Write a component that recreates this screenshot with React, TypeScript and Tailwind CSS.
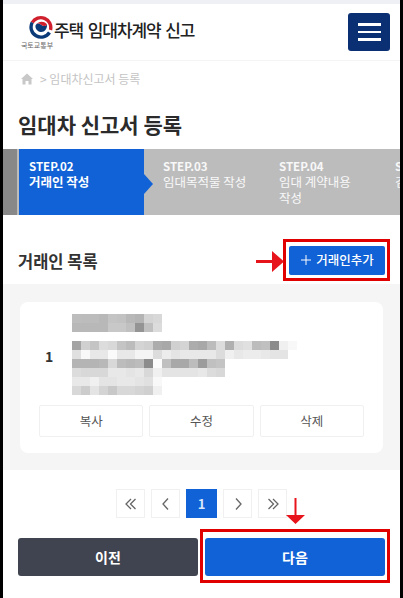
import React from "react";

const font = "font-['Noto_Sans_CJK_KR','Noto_Sans',sans-serif]";

// blurred-out personal info, one row of grey cells per line
const mosaicRows: string[][] = [
  ["#bdbdbd", "#bcbcbc", "#bcbcbc", "#b8b8b8", "#c4c4c4", "#c2c2c2", "#b8b8b8", "#b4b4b4", "#d4d4d4", "#d8d8d8"],
  ["#b8b8b8", "#b8b8b8", "#b8b8b8", "#b8b8b8", "#c8c8c8", "#c8c8c8", "#c0c0c0", "#949494", "#c0c0c0", "#dcdcdc"],
  [],
  ["#a4a4a4", "#d0d0d0", "#c4c4c4", "#dcdcdc", "#d8d8d8", "#c4c4c4", "#bcbcbc", "#d4d4d4", "#d0d0d0", "#acacac", "#a8a8a8", "#d0d0d0", "#d4d4d4", "#acacac", "#a8a8a8", "#bcbcbc", "#dcdcdc", "#b0b0b0", "#dcdcdc", "#e0e0e0", "#bcbcbc", "#c0c0c0", "#8c8c8c", "#f0f0f0", "#f8f8f8"],
  ["#e0e0e0", "#f8f8f8", "#e8e8e8", "#e8e8e8", "#fafafa", "#e8e8e8", "#e8e8e8", "#f4f4f4", "#f4f4f4", "#dcdcdc", "#ececec", "#e4e4e4", "#e8e8e8", "#e8e8e8", "#e8e8e8", "#e8e8e8", "#dcdcdc", "#f0f0f0", "#e8e8e8", "#ececec", "#ececec", "#e8e8e8", "#e4e4e4", "#e4e4e4"],
  ["#b4b4b4", "#b4b4b4", "#b4b4b4", "#b8b8b8", "#d8d8d8", "#bcbcbc", "#b8b8b8", "#bcbcbc", "#8c8c8c", "#fcfcfc", "#c0c0c0", "#a8a8a8", "#a8a8a8", "#bcbcbc", "#9c9c9c", "#c0c0c0", "#c4c4c4"],
  ["#dcdcdc", "#d8d8d8", "#d8d8d8", "#d8d8d8", "#e8e8e8", "#e8e8e8", "#e4e4e4", "#e8e8e8", "#d8d8d8", "#f0f0f0", "#e4e4e4", "#e4e4e4", "#e4e4e4", "#e4e4e4", "#e8e8e8", "#dcdcdc", "#d8d8d8"],
  ["#e8e8e8", "#e8e8e8", "#f0f0f0", "#e4e4e4", "#e4e4e4", "#e8e8e8", "#e8e8e8", "#e4e4e4", "#e0e0e0", "#f8f8f8"],
  ["#d8d8d8", "#cccccc", "#e4e4e4", "#d4d4d4", "#c8c8c8", "#d8d8d8", "#d8d8d8", "#d4d4d4", "#d0d0d0", "#f0f0f0"],
];

const Mosaic = () => (
  <div className="flex flex-col">
    {mosaicRows.map((row, i) => (
      <div key={i} className="flex h-[9px]">
        {row.map((c, j) => (
          <div key={j} className="w-[9px] h-[9px] shrink-0" style={{ backgroundColor: c }} />
        ))}
      </div>
    ))}
  </div>
);

const Logo = () => (
  <div className="flex flex-col items-center w-[34px]">
    <svg width="24" height="24" viewBox="0 0 24 24" fill="none" className="ml-[5px]">
      <path d="M3.200 7.500A10 10 0 0 1 21.500 15" stroke="#d0202e" strokeWidth="3.400" />
      <path d="M3.200 7.500A10 10 0 0 0 20.500 17.500" stroke="#0b3a78" strokeWidth="3.400" />
      <path d="M6.500 10.500C8 7.500 11 8.500 12.500 10c1.500 1.500 4 1.500 5.500-.5.500 4-2.500 8-6.500 7.500-3-.3-5.500-3.500-5-6.500Z" fill="#0b3a78" />
      <path d="M6.500 10.500C8 7.500 11 8.500 12.500 10c1.500 1.500 4 1.500 5.500-.5C16.500 6 9 5 6.500 10.500Z" fill="#d0202e" />
    </svg>
    <span className="text-[7px] leading-[8px] text-[#666] mt-[2px] -ml-[2px] whitespace-nowrap">국토교통부</span>
  </div>
);

const PageBtn = ({ children, active }: { children: React.ReactNode; active?: boolean }) => (
  <div
    className={
      active
        ? "w-[31px] h-[29px] flex items-center justify-center bg-[#1062d6] text-[#d8e6fa] text-[13px] font-bold"
        : "w-[29px] h-[29px] flex items-center justify-center bg-white border border-[#f0f0f0] text-[#555]"
    }
  >
    {children}
  </div>
);

const Chevron = ({ d }: { d: string }) => (
  <svg width="16" height="16" viewBox="0 0 16 16" fill="none" stroke="#666" strokeWidth="1.300">
    <path d={d} />
  </svg>
);

const RedArrowRight = () => (
  <svg width="29" height="21" viewBox="0 0 29 21">
    <path d="M0 9h16V0l12 10.500L16 21v-9H0Z" fill="#e8141c" />
  </svg>
);

const RedArrowDown = () => (
  <svg width="21" height="27" viewBox="0 0 21 27">
    <path d="M9.500 0h2v17H20L10.500 26 1 17h8.500Z" fill="#e8141c" />
  </svg>
);

export default function App() {
  return (
    <div className={`${font} w-[403px] h-[598px] bg-black px-[3px] overflow-hidden`}>
      <div className="w-[397px] h-[598px] bg-white flex flex-col">
        <div className="h-[4px] bg-[#eef0f5]" />
        {/* header */}
        <div className="h-[57px] flex items-center justify-between pl-[18px] pr-[10px] border-b border-[#f4f4f4]">
          <div className="flex items-center">
            <Logo />
            <span className="-ml-[1px] -mt-[5px] text-[17px] leading-[24px] font-medium text-[#222] tracking-[-1.100px] [word-spacing:2px] whitespace-nowrap">
              주택 임대차계약 신고
            </span>
          </div>
          <button className="w-[42px] h-[38px] rounded-[3px] bg-[#0b2f73] flex flex-col items-center justify-center gap-[5px]">
            <span className="w-[23px] h-[2.5px] bg-white" />
            <span className="w-[23px] h-[2.5px] bg-white" />
            <span className="w-[23px] h-[2.5px] bg-white" />
          </button>
        </div>

        {/* breadcrumb */}
        <div className="h-[36px] flex items-center pl-[18px] text-[12px] text-[#c4c4c4]">
          <svg width="12" height="12" viewBox="0 0 12 12" fill="#c8c8c8">
            <path d="M6 .5 0 6h1.500v5.500h3V8h3v3.500h3V6H12Z" />
          </svg>
          <span className="ml-[7px] whitespace-nowrap">&gt; 임대차신고서 등록</span>
        </div>

        <h1 className="mt-[11px] pl-[15px] text-[21px] leading-[32px] font-semibold text-[#2b2b2b] whitespace-nowrap">
          임대차 신고서 등록
        </h1>

        {/* steps */}
        <div className="mt-[9px] h-[66px] flex bg-[#bcbcbc] text-[12.500px] leading-[16px] overflow-hidden">
          <div className="w-[14px] bg-[#888] mr-[2px] shrink-0" />
          <div className="relative w-[125px] bg-[#1062d6] text-white pl-[10px] pt-[9px] shrink-0">
            <div className="text-[11.500px] font-bold">STEP.02</div>
            <div className="font-semibold">거래인 작성</div>
            <div className="absolute left-full top-[25px] w-0 h-0 border-y-[10px] border-y-transparent border-l-[9px] border-l-[#1062d6]" />
          </div>
          <div className="w-[116px] shrink-0 pl-[19px] pt-[9px] text-white/90">
            <div className="text-[11.500px] font-bold">STEP.03</div>
            <div className="whitespace-nowrap">임대목적물 작성</div>
          </div>
          <div className="w-[116px] shrink-0 pl-[19px] pt-[9px] text-white/90">
            <div className="text-[11.500px] font-bold">STEP.04</div>
            <div>임대 계약내용<br />작성</div>
          </div>
          <div className="shrink-0 pl-[19px] pt-[9px] text-white/90">
            <div className="text-[11.500px] font-bold">STEP.05</div>
            <div>검토</div>
          </div>
        </div>

        {/* list title */}
        <div className="h-[69px] flex items-center justify-between pl-[15px] pr-[15px]">
          <h2 className="text-[16.500px] font-semibold text-[#333] whitespace-nowrap mt-[23px]">거래인 목록</h2>
          <div className="relative mt-[21px]">
            <button className="w-[96px] h-[29px] rounded-[2px] bg-[#1062d6] text-white text-[12.500px] font-medium flex items-center justify-center gap-[4px] whitespace-nowrap">
              <svg width="12" height="12" viewBox="0 0 12 12" stroke="#fff" strokeWidth="1">
                <path d="M6 1v10M1 6h10" />
              </svg>
              거래인추가
            </button>
            <div className="absolute -left-[6px] -right-[5px] -top-[7px] -bottom-[6px] border-[3px] border-[#e00000]" />
            <div className="absolute -left-[33px] top-[5px]">
              <RedArrowRight />
            </div>
          </div>
        </div>

        {/* list */}
        <div className="h-[186px] bg-[#f5f5f5] pt-[18px] px-[17px]">
          <div className="h-[151px] rounded-[8px] bg-white px-[19px] pt-[12px]">
            <div className="flex items-center h-[81px]">
              <span className="w-[33px] pl-[6px] pt-[3px] text-[14px] font-bold text-[#333]">1</span>
              <Mosaic />
            </div>
            <div className="mt-[10px] flex gap-[6px]">
              {["복사", "수정", "삭제"].map((label) => (
                <button
                  key={label}
                  className="flex-1 h-[32px] bg-white border border-[#f0f0f0] rounded-[2px] text-[12.500px] text-[#555]"
                >
                  {label}
                </button>
              ))}
            </div>
          </div>
        </div>

        {/* pagination */}
        <div className="mt-[19px] flex justify-center gap-[6px]">
          <PageBtn>
            <Chevron d="M8 3 3 8l5 5M12.500 3l-5 5 5 5" />
          </PageBtn>
          <PageBtn>
            <Chevron d="M10 2.500 5 8l5 5.500" />
          </PageBtn>
          <PageBtn active>1</PageBtn>
          <PageBtn>
            <Chevron d="M6 2.500 11 8l-5 5.500" />
          </PageBtn>
          <PageBtn>
            <Chevron d="M3.500 3l5 5-5 5M8 3l5 5-5 5" />
          </PageBtn>
        </div>

        {/* prev / next */}
        <div className="mt-[20px] flex gap-[7px] px-[15px]">
          <button className="flex-1 h-[38px] rounded-[3px] bg-[#404450] text-white text-[14px] font-bold">이전</button>
          <div className="relative flex-1">
            <button className="w-full h-[38px] rounded-[3px] bg-[#1062d6] text-white text-[14px] font-bold">다음</button>
            <div className="absolute -left-[5px] -right-[5px] -top-[9px] -bottom-[7px] border-[3px] border-[#e00000]" />
            <div className="absolute left-[80px] -top-[40px]">
              <RedArrowDown />
            </div>
          </div>
        </div>
      </div>
    </div>
  );
}
